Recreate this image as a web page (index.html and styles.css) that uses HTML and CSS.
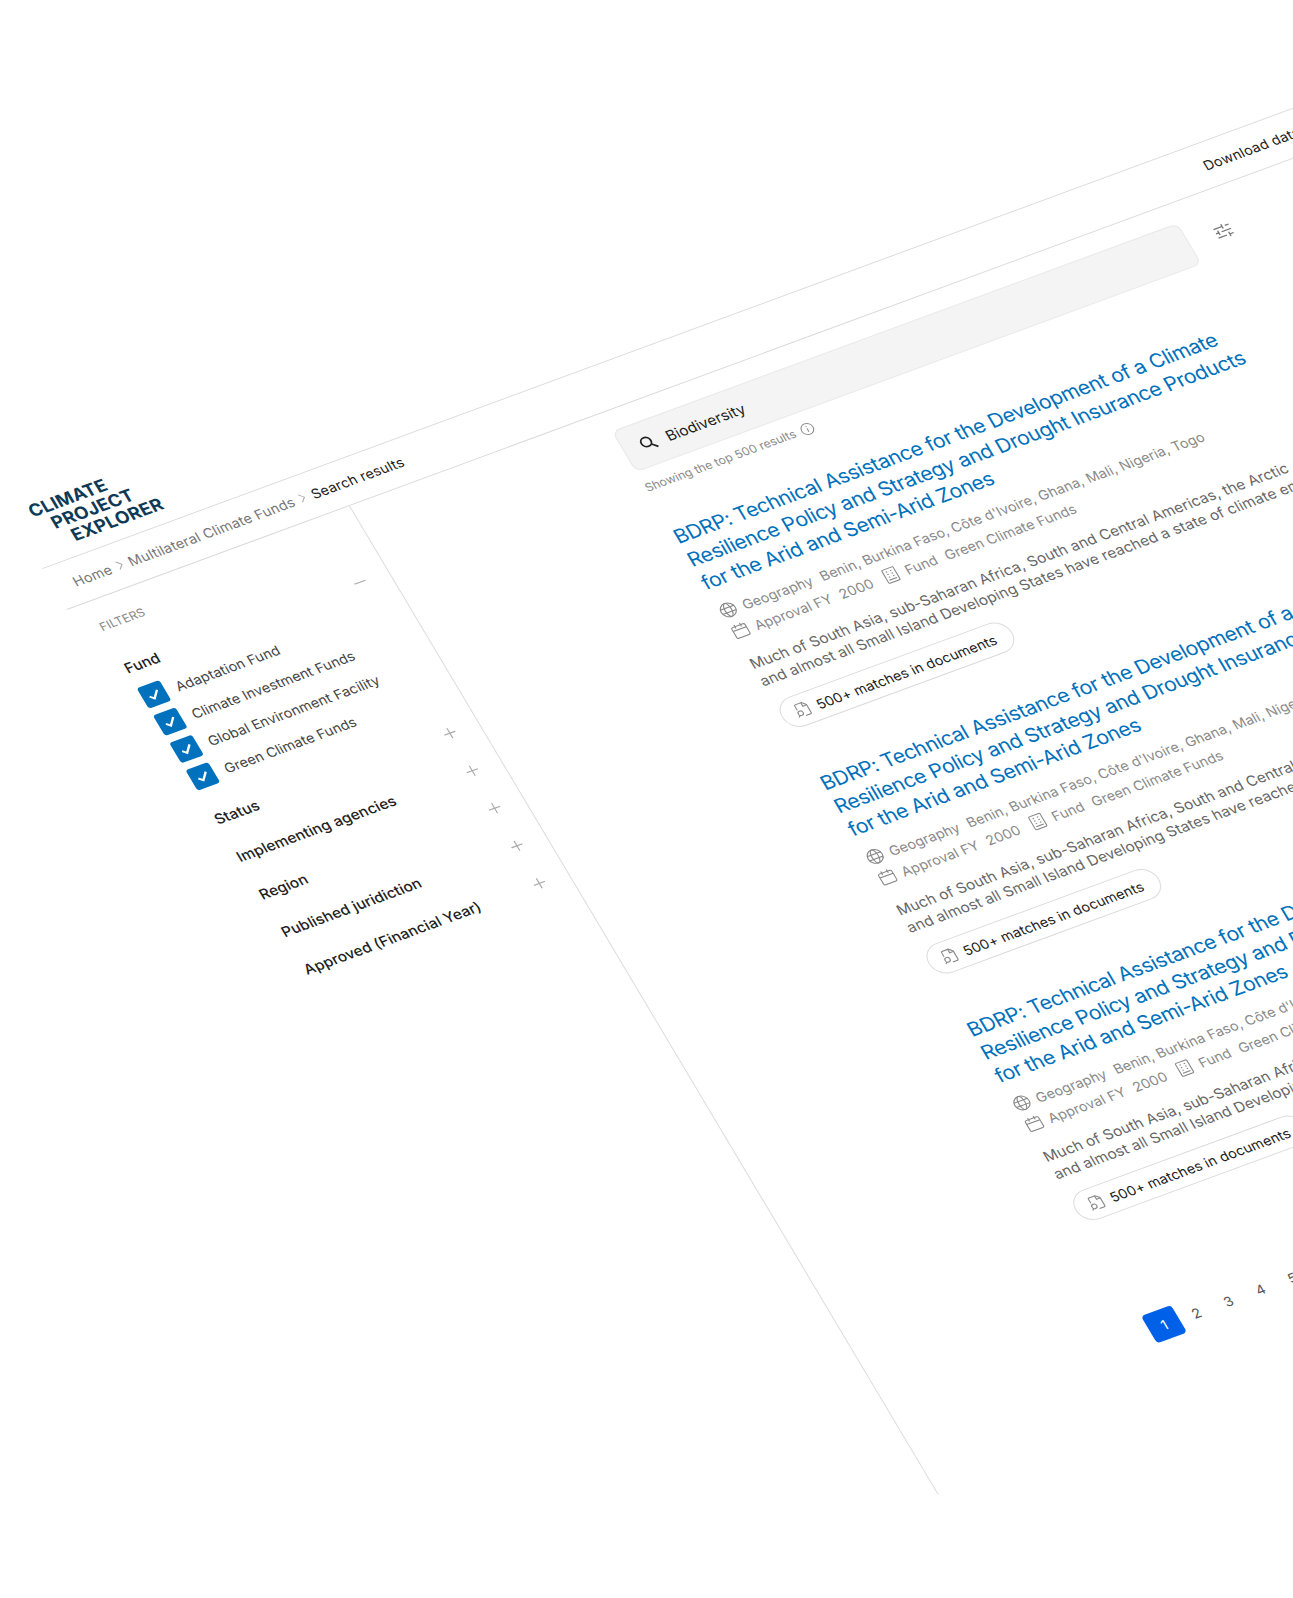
FILE: index.html
```html
<!DOCTYPE html>
<html lang="en">
<head>
    <meta charset="UTF-8">
    <title>Climate Project Explorer - Search results</title>
    <link rel="stylesheet" href="styles.css">
</head>
<body>
    <!-- shared icons -->
    <svg class="sprite" xmlns="http://www.w3.org/2000/svg">
        <symbol id="i-globe" viewBox="0 0 18 18"><circle cx="9" cy="9" r="7.5"/><ellipse cx="9" cy="9" rx="3.2" ry="7.5"/><path d="M1.8 6.5h14.4M1.8 11.5h14.4"/></symbol>
        <symbol id="i-calendar" viewBox="0 0 18 18"><rect x="2" y="3.5" width="14" height="12.5" rx="1.5"/><path d="M2 7.5h14M6 1.5v4M12 1.5v4"/></symbol>
        <symbol id="i-building" viewBox="0 0 18 18"><rect x="3" y="1.5" width="12" height="15" rx="1"/><path d="M6 4.5h1.5M10.500 4.500H12M6 7.500h1.500M10.500 7.500H12M6 10.500h1.500M10.500 10.500H12M5 13.500h8"/></symbol>
        <symbol id="i-doc" viewBox="0 0 18 18"><path d="M4 8V3a1 1 0 0 1 1-1h6.500L15 5.500V15a1 1 0 0 1-1 1H9"/><path d="M11 2v4h4"/><circle cx="5.500" cy="12" r="2.500"/><path d="M3.700 13.800 2 15.500"/></symbol>
        <symbol id="i-check" viewBox="0 0 24 24"><path d="M7 12.500l3.500 3.500L17 8.500"/></symbol>
    </svg>

    <div class="page">
        <header class="topbar">
            <a class="logo">
                <span>CLIMATE</span>
                <span class="logo-l2">PROJECT</span>
                <span class="logo-l3">EXPLORER</span>
            </a>
        </header>

        <nav class="crumbs">
            <a>Home</a>
            <svg class="chev" viewBox="0 0 8 12"><path d="M1.500 1l5 5-5 5"/></svg>
            <a>Multilateral Climate Funds</a>
            <svg class="chev" viewBox="0 0 8 12"><path d="M1.500 1l5 5-5 5"/></svg>
            <b>Search results</b>
            <a class="download">Download data</a>
        </nav>

        <div class="layout">
            <aside class="sidebar">
                <p class="filters-title">FILTERS</p>

                <div class="filter-head open">
                    <span>Fund</span>
                    <svg class="toggle" viewBox="0 0 12 12"><path d="M0 6h12"/></svg>
                </div>
                <ul class="checks">
                    <li><span class="box"><svg><use href="#i-check"/></svg></span>Adaptation Fund</li>
                    <li><span class="box"><svg><use href="#i-check"/></svg></span>Climate Investment Funds</li>
                    <li><span class="box"><svg><use href="#i-check"/></svg></span>Global Environment Facility</li>
                    <li><span class="box"><svg><use href="#i-check"/></svg></span>Green Climate Funds</li>
                </ul>

                <div class="filter-list">
                    <div class="filter-head"><span>Status</span><svg class="toggle" viewBox="0 0 12 12"><path d="M0 6h12M6 0v12"/></svg></div>
                    <div class="filter-head"><span>Implementing agencies</span><svg class="toggle" viewBox="0 0 12 12"><path d="M0 6h12M6 0v12"/></svg></div>
                    <div class="filter-head"><span>Region</span><svg class="toggle" viewBox="0 0 12 12"><path d="M0 6h12M6 0v12"/></svg></div>
                    <div class="filter-head"><span>Published juridiction</span><svg class="toggle" viewBox="0 0 12 12"><path d="M0 6h12M6 0v12"/></svg></div>
                    <div class="filter-head"><span>Approved (Financial Year)</span><svg class="toggle" viewBox="0 0 12 12"><path d="M0 6h12M6 0v12"/></svg></div>
                </div>
            </aside>

            <main class="results">
                <div class="search-row">
                    <div class="search">
                        <svg class="search-icon" viewBox="0 0 18 18"><circle cx="7.500" cy="7.500" r="5"/><path d="M11.300 11.300 16 16"/></svg>
                        <span>Biodiversity</span>
                    </div>
                    <svg class="sliders" viewBox="0 0 18 18"><path d="M1 4h9M13 4h4M10 1.500v5M1 9h3M7 9h10M4 6.500v5M1 14h9M13 14h4M13 11.500v5"/></svg>
                </div>
                <p class="note">Showing the top 500 results
                    <svg class="info" viewBox="0 0 14 14"><circle cx="7" cy="7" r="6"/><path d="M7 6.200v4M7 3.800v1"/></svg>
                </p>

                <article class="card">
                    <h2>BDRP: Technical Assistance for the Development of a Climate<br>Resilience Policy and Strategy and Drought Insurance Products<br>for the Arid and Semi-Arid Zones</h2>
                    <div class="meta">
                        <svg class="ico"><use href="#i-globe"/></svg><span class="k">Geography</span><span class="v">Benin, Burkina Faso, Côte d'Ivoire, Ghana, Mali, Nigeria, Togo</span>
                    </div>
                    <div class="meta">
                        <svg class="ico"><use href="#i-calendar"/></svg><span class="k">Approval FY</span><span class="v">2000</span>
                        <svg class="ico ico-b"><use href="#i-building"/></svg><span class="k">Fund</span><span class="v">Green Climate Funds</span>
                    </div>
                    <p class="desc">Much of South Asia, sub-Saharan Africa, South and Central Americas, the Arctic<br>and almost all Small Island Developing States have reached a state of climate emergency.</p>
                    <a class="pill"><svg class="ico"><use href="#i-doc"/></svg>500+ matches in documents</a>
                </article>

                <article class="card">
                    <h2>BDRP: Technical Assistance for the Development of a Climate<br>Resilience Policy and Strategy and Drought Insurance Products<br>for the Arid and Semi-Arid Zones</h2>
                    <div class="meta">
                        <svg class="ico"><use href="#i-globe"/></svg><span class="k">Geography</span><span class="v">Benin, Burkina Faso, Côte d'Ivoire, Ghana, Mali, Nigeria, Togo</span>
                    </div>
                    <div class="meta">
                        <svg class="ico"><use href="#i-calendar"/></svg><span class="k">Approval FY</span><span class="v">2000</span>
                        <svg class="ico ico-b"><use href="#i-building"/></svg><span class="k">Fund</span><span class="v">Green Climate Funds</span>
                    </div>
                    <p class="desc">Much of South Asia, sub-Saharan Africa, South and Central Americas, the Arctic<br>and almost all Small Island Developing States have reached a state of climate emergency.</p>
                    <a class="pill"><svg class="ico"><use href="#i-doc"/></svg>500+ matches in documents</a>
                </article>

                <article class="card">
                    <h2>BDRP: Technical Assistance for the Development of a Climate<br>Resilience Policy and Strategy and Drought Insurance Products<br>for the Arid and Semi-Arid Zones</h2>
                    <div class="meta">
                        <svg class="ico"><use href="#i-globe"/></svg><span class="k">Geography</span><span class="v">Benin, Burkina Faso, Côte d'Ivoire, Ghana, Mali, Nigeria, Togo</span>
                    </div>
                    <div class="meta">
                        <svg class="ico"><use href="#i-calendar"/></svg><span class="k">Approval FY</span><span class="v">2000</span>
                        <svg class="ico ico-b"><use href="#i-building"/></svg><span class="k">Fund</span><span class="v">Green Climate Funds</span>
                    </div>
                    <p class="desc">Much of South Asia, sub-Saharan Africa, South and Central Americas, the Arctic<br>and almost all Small Island Developing States have reached a state of climate emergency.</p>
                    <a class="pill"><svg class="ico"><use href="#i-doc"/></svg>500+ matches in documents</a>
                </article>

                <div class="pager">
                    <a class="current">1</a><a>2</a><a>3</a><a>4</a><a>5</a>
                </div>
            </main>
        </div>
    </div>
</body>
</html>
```

FILE: styles.css
```css
/* the whole page sits on a skewed plane, like the mockup */
html, body {
    margin: 0;
    height: 100%;
    overflow: hidden;
    background-color: #fff;
}

body {
    font-family: Inter, "Liberation Sans", sans-serif;
    color: #222;
}

.sprite {
    display: none;
}

.page {
    width: 1600px;
    height: 1280px;
    transform-origin: 0 0;
    transform: matrix(0.94, -0.346, 0.508, 0.853, 6.1, 507.6);
}

/* header */
.topbar {
    box-sizing: border-box;
    height: 72px;
    padding: 3px 0 0 18px;
    border-bottom: 1px solid #dcdcdc;
}

.logo {
    display: flex;
    flex-direction: column;
    font-size: 18px;
    font-weight: 700;
    line-height: 19px;
    letter-spacing: 0.2px;
    color: #0f3a56;
}

.logo-l2 {
    padding-left: 14px;
}

.logo-l3 {
    padding-left: 25px;
}

.crumbs {
    box-sizing: border-box;
    height: 48px;
    padding: 0 0 0 20px;
    display: flex;
    align-items: center;
    gap: 6px;
    font-size: 14px;
    letter-spacing: 0.18px;
    color: #777;
    border-bottom: 1px solid #dcdcdc;
}

.crumbs b {
    font-weight: 400;
    color: #222;
}

.chev {
    width: 7px;
    height: 11px;
    fill: none;
    stroke: #aaa;
    stroke-width: 1.2;
}

.download {
    margin-left: 846px;
    color: #222;
}

/* main layout */
.layout {
    display: flex;
    height: 1159px;
}

.sidebar {
    box-sizing: border-box;
    width: 301px;
    padding: 21px 24px 0 20px;
    border-right: 1px solid #dcdcdc;
}

.filters-title {
    margin: 0 0 28px;
    font-size: 12px;
    line-height: 16px;
    color: #8a8a8a;
}

.filter-head {
    display: flex;
    align-items: center;
    justify-content: space-between;
    height: 24px;
    font-size: 15px;
    font-weight: 500;
    letter-spacing: 0.05px;
}

.toggle {
    width: 12px;
    height: 12px;
    fill: none;
    stroke: #aaa;
    stroke-width: 1.2;
}

.checks {
    list-style: none;
    margin: 11px 0 22px;
    padding: 0;
    display: flex;
    flex-direction: column;
    gap: 8px;
}

.checks li {
    display: flex;
    align-items: center;
    gap: 11px;
    height: 24px;
    font-size: 14px;
    letter-spacing: 0.05px;
    color: #444;
}

.box {
    width: 24px;
    height: 24px;
    border-radius: 3px;
    background-color: #0071bc;
}

.box svg {
    display: block;
    width: 24px;
    height: 24px;
    fill: none;
    stroke: #fff;
    stroke-width: 2.2;
}

.filter-list {
    display: flex;
    flex-direction: column;
    gap: 20px;
}

/* results column */
.results {
    padding: 21px 0 0 267px;
    width: 1000px;
}

.search-row {
    display: flex;
    align-items: center;
    gap: 27px;
}

.search {
    box-sizing: border-box;
    width: 602px;
    height: 48px;
    padding: 0 16px;
    display: flex;
    align-items: center;
    gap: 10px;
    font-size: 15px;
    color: #222;
    background-color: #f4f4f4;
    border: 1px solid #e8e8e8;
    border-radius: 8px;
}

.search-icon {
    width: 18px;
    height: 18px;
    fill: none;
    stroke: #222;
    stroke-width: 1.8;
}

.sliders {
    width: 18px;
    height: 18px;
    fill: none;
    stroke: #777;
    stroke-width: 1.3;
}

.note {
    display: flex;
    align-items: center;
    gap: 6px;
    margin: 11px 0 0;
    font-size: 12px;
    line-height: 16px;
    color: #8a8a8a;
}

.info {
    width: 14px;
    height: 14px;
    fill: none;
    stroke: #888;
}

.card {
    margin-top: 36px;
    white-space: nowrap;
}

.card + .card {
    margin-top: 48px;
}

.card h2 {
    margin: 0 0 9px;
    font-size: 20.5px;
    font-weight: 400;
    line-height: 27px;
    letter-spacing: -0.33px;
    color: #0071bc;
}

.meta {
    display: flex;
    align-items: center;
    height: 24px;
    font-size: 14px;
    letter-spacing: 0.03px;
    color: #8a8a8a;
}

.ico {
    width: 18px;
    height: 18px;
    fill: none;
    stroke: #888;
    stroke-width: 1.1;
    flex-shrink: 0;
}

.ico-b {
    margin-left: 11px;
}

.k {
    margin-left: 6px;
}

.v {
    margin-left: 9px;
}

.desc {
    margin: 15px 0 14px;
    font-size: 15px;
    line-height: 20px;
    letter-spacing: 0.03px;
    color: #666;
}

.pill {
    box-sizing: border-box;
    display: inline-flex;
    align-items: center;
    gap: 6px;
    width: 245px;
    height: 34px;
    padding: 0 12px;
    font-size: 14px;
    letter-spacing: 0.05px;
    color: #222;
    border: 1px solid #dcdcdc;
    border-radius: 17px;
}

.pager {
    display: flex;
    gap: 2px;
    margin: 108px 0 0 2px;
}

.pager a {
    width: 32px;
    height: 32px;
    display: flex;
    align-items: center;
    justify-content: center;
    font-size: 14px;
    color: #555;
    border-radius: 4px;
}

.pager .current {
    color: #fff;
    background-color: #0061e8;
}
```
